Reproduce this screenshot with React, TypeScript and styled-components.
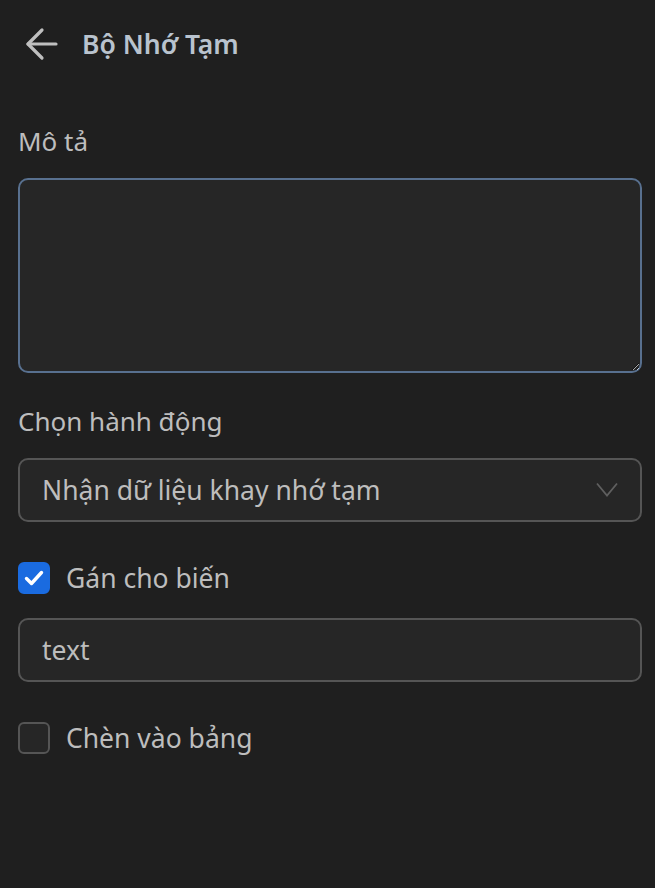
import React, { useState } from 'react';
import styled, { createGlobalStyle } from 'styled-components';

const GlobalStyle = createGlobalStyle`
	html, body {
		margin: 0;
		padding: 0;
		background: #1f1f1f;
	}
	body {
		font-family: 'Noto Sans', 'Open Sans', sans-serif;
		color: #bdbdbd;
	}
`;

const Page = styled.div`
	width: 655px;
	min-height: 888px;
	box-sizing: border-box;
	padding: 0 13px 0 18px;
	display: flex;
	flex-direction: column;
`;

const Header = styled.div`
	display: flex;
	align-items: center;
	flex-shrink: 0;
	height: 88px;
	gap: 23px;
	padding-left: 7px;
`;

const BackButton = styled.button`
	display: flex;
	align-items: center;
	justify-content: center;
	background: none;
	border: none;
	padding: 0;
	color: #bfbfbf;
	cursor: pointer;
`;

const Title = styled.h1`
	margin: 0;
	font-size: 26.5px;
	font-weight: 600;
	color: #b9c3ce;
`;

const Label = styled.label<{ $top: number }>`
	display: block;
	flex-shrink: 0;
	font-size: 26px;
	color: #bdbdbd;
	margin: ${(p) => p.$top}px 0 20px;
	line-height: 34px;
`;

const TextArea = styled.textarea`
	display: block;
	flex-shrink: 0;
	box-sizing: border-box;
	width: 100%;
	height: 195px;
	margin: 0;
	background: #262626;
	border: 2px solid #58708f;
	border-radius: 10px;
	color: #bdbdbd;
	font: inherit;
	font-size: 26px;
	padding: 12px 22px;
	resize: vertical;
	outline: none;
`;

const Field = styled.div<{ $top?: number }>`
	display: flex;
	align-items: center;
	flex-shrink: 0;
	box-sizing: border-box;
	width: 100%;
	height: 64px;
	margin-top: ${(p) => p.$top ?? 0}px;
	background: #262626;
	border: 2px solid #555555;
	border-radius: 10px;
	padding: 0 22px;
	font-size: 26.5px;
	color: #bdbdbd;
`;

const FieldText = styled.span`
	flex: 1;
`;

const CheckRow = styled.label<{ $top: number }>`
	display: flex;
	align-items: center;
	flex-shrink: 0;
	gap: 16px;
	height: 34px;
	font-size: 26.5px;
	line-height: 34px;
	color: #bdbdbd;
	margin-top: ${(p) => p.$top}px;
	cursor: pointer;
`;

const Box = styled.span<{ $checked: boolean }>`
	display: flex;
	align-items: center;
	justify-content: center;
	box-sizing: border-box;
	width: 32px;
	height: 32px;
	border-radius: 6px;
	background: ${(p) => (p.$checked ? '#1a6be0' : '#262626')};
	border: 2px solid ${(p) => (p.$checked ? '#1a6be0' : '#555555')};
`;

const Arrow = () => (
	<svg width="34" height="34" viewBox="0 0 34 34" fill="none" stroke="currentColor" strokeWidth="3.2" strokeLinecap="round" strokeLinejoin="round">
		<path d="M31 17H3" />
		<path d="M17 3L3 17l14 14" />
	</svg>
);

const Chevron = () => (
	<svg width="22" height="16" viewBox="0 0 22 16" fill="none" stroke="#5f5f5f" strokeWidth="1.8">
		<path d="M1 1.5l10 12 10-12" />
	</svg>
);

const Check = () => (
	<svg width="20" height="16" viewBox="0 0 20 16" fill="none" stroke="#ffffff" strokeWidth="3.4" strokeLinecap="round" strokeLinejoin="round">
		<path d="M2.5 8.5l5 5L17.5 2.5" />
	</svg>
);

const App = () => {
	const [assign, setAssign] = useState(true);
	const [insert, setInsert] = useState(false);

	return (
		<Page>
			<GlobalStyle />
			<Header>
				<BackButton aria-label="Back">
					<Arrow />
				</BackButton>
				<Title>Bộ Nhớ Tạm</Title>
			</Header>

			<Label $top={36}>Mô tả</Label>
			<TextArea />

			<Label $top={31}>Chọn hành động</Label>
			<Field>
				<FieldText>Nhận dữ liệu khay nhớ tạm</FieldText>
				<Chevron />
			</Field>

			<CheckRow $top={39} onClick={() => setAssign(!assign)}>
				<Box $checked={assign}>{assign && <Check />}</Box>
				Gán cho biến
			</CheckRow>

			<Field $top={23}>
				<FieldText>text</FieldText>
			</Field>

			<CheckRow $top={39} onClick={() => setInsert(!insert)}>
				<Box $checked={insert}>{insert && <Check />}</Box>
				Chèn vào bảng
			</CheckRow>
		</Page>
	);
};

export default App;
